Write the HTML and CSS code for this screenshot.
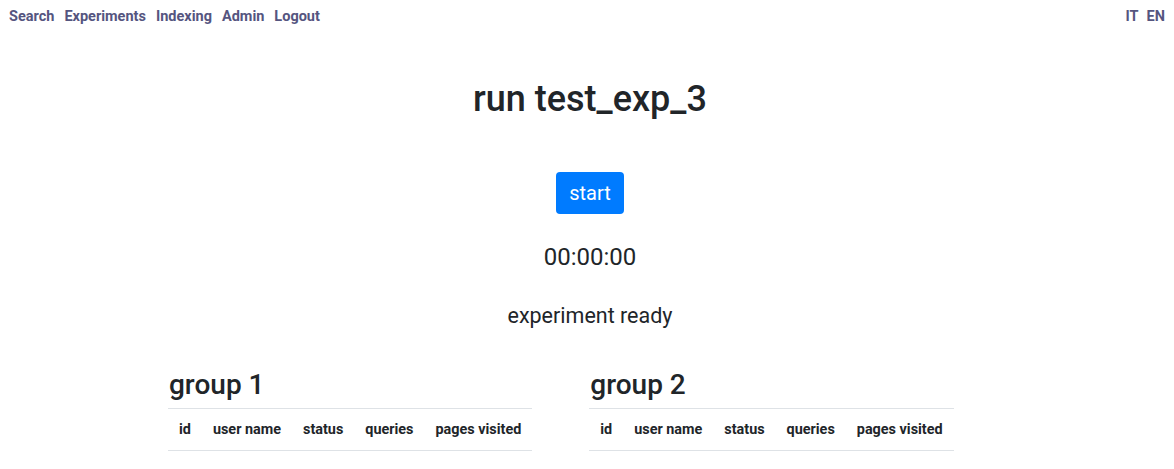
FILE: index.html
```html
<!DOCTYPE html>
<html lang="en">
<head>
<meta charset="utf-8">
<title>run test_exp_3</title>
<link rel="stylesheet" href="styles.css">
</head>
<body>
<nav class="topnav">
  <div class="nav-left">
    <a href="#">Search</a>
    <a href="#">Experiments</a>
    <a href="#">Indexing</a>
    <a href="#">Admin</a>
    <a href="#">Logout</a>
  </div>
  <div class="nav-right">
    <a href="#">IT</a>
    <a href="#">EN</a>
  </div>
</nav>
<main class="page">
  <h1 class="title">run test_exp_3</h1>
  <button class="btn-start" type="button">start</button>
  <div class="timer">00:00:00</div>
  <div class="status">experiment ready</div>
  <div class="groups">
    <section class="group">
      <h3 class="group-title">group 1</h3>
      <table class="tbl">
        <thead>
          <tr><th>id</th><th>user name</th><th>status</th><th>queries</th><th>pages visited</th></tr>
        </thead>
        <tbody></tbody>
      </table>
    </section>
    <section class="group">
      <h3 class="group-title">group 2</h3>
      <table class="tbl">
        <thead>
          <tr><th>id</th><th>user name</th><th>status</th><th>queries</th><th>pages visited</th></tr>
        </thead>
        <tbody></tbody>
      </table>
    </section>
  </div>
</main>
</body>
</html>
```
FILE: styles.css
```css
html, body {
  margin: 0;
  padding: 0;
  background: #fff;
}
body {
  font-family: Roboto, "Liberation Sans", sans-serif;
  color: #212529;
  font-size: 16px;
  line-height: 1.5;
}
.topnav {
  display: flex;
  justify-content: space-between;
  align-items: center;
  height: 33px;
  padding: 0 9px;
}
.topnav a {
  color: #55557f;
  font-weight: 700;
  font-size: 14.5px;
  text-decoration: none;
}
.nav-left {
  display: flex;
  gap: 10px;
}
.nav-right {
  display: flex;
  gap: 8px;
}
.page {
  display: flex;
  flex-direction: column;
  align-items: center;
  padding-left: 6px;
}
.title {
  margin: 45px 0 0;
  font-size: 36px;
  font-weight: 500;
  line-height: 1.2;
}
.btn-start {
  margin-top: 51px;
  background: #007bff;
  color: #fff;
  border: none;
  border-radius: 4px;
  font-family: inherit;
  font-size: 20px;
  line-height: 30px;
  padding: 6px 13px;
}
.timer {
  margin-top: 29px;
  font-size: 24px;
  line-height: 1.2;
}
.status {
  margin-top: 31px;
  font-size: 21.5px;
  line-height: 1.2;
}
.groups {
  align-self: stretch;
  display: flex;
  gap: 57px;
  padding-left: 162px;
  margin-top: 39px;
}
.group-title {
  margin: 0 0 7px;
  font-size: 28px;
  font-weight: 500;
  line-height: 1.2;
  padding-left: 1px;
}
.tbl {
  border-collapse: collapse;
  width: 363px;
}
.tbl th {
  font-size: 14.4px;
  font-weight: 700;
  text-align: left;
  padding: 10.5px 11px;
  line-height: 20px;
  border-top: 1px solid #dee2e6;
  border-bottom: 1px solid #dee2e6;
  white-space: nowrap;
}
```
